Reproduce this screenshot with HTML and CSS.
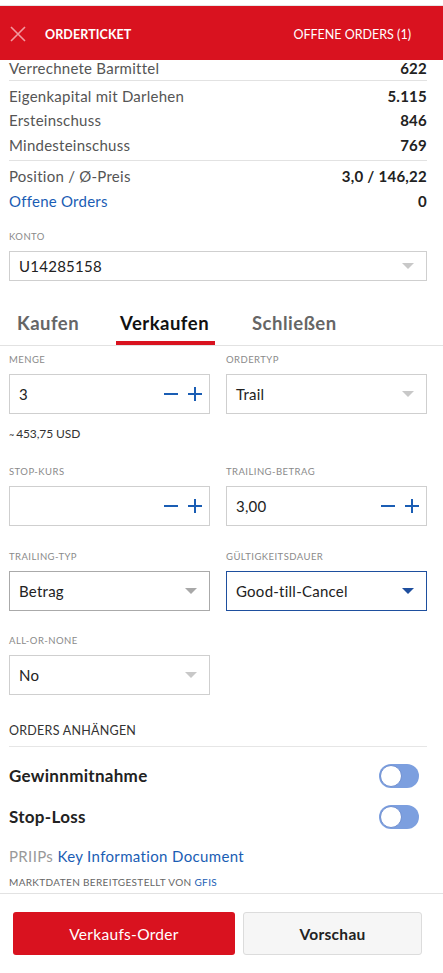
FILE: index.html
```html
<!DOCTYPE html>
<html lang="de">
<head>
    <meta charset="UTF-8">
    <meta name="viewport" content="width=device-width, initial-scale=1.0">
    <title>Orderticket</title>
    <link rel="stylesheet" href="styles.css">
</head>
<body>
    <div class="screen">
        <!-- Header (liegt über dem gescrollten Inhalt) -->
        <div class="header">
            <div class="header-left">
                <svg class="close-icon" width="16" height="16" viewBox="0 0 16 16">
                    <path d="M1 1 L15 15 M15 1 L1 15" stroke="currentColor" stroke-width="1.6" fill="none"/>
                </svg>
                <span class="header-title">ORDERTICKET</span>
            </div>
            <span class="header-link">OFFENE ORDERS (1)</span>
        </div>

        <div class="content">
            <!-- Kontoübersicht -->
            <div class="summary">
                <div class="row top"><span class="row-label">Verrechnete Barmittel</span><span class="row-value">622</span></div>
                <div class="divider"></div>
                <div class="row"><span class="row-label">Eigenkapital mit Darlehen</span><span class="row-value">5.115</span></div>
                <div class="row"><span class="row-label">Ersteinschuss</span><span class="row-value">846</span></div>
                <div class="row"><span class="row-label">Mindesteinschuss</span><span class="row-value">769</span></div>
                <div class="divider"></div>
                <div class="row"><span class="row-label">Position / Ø-Preis</span><span class="row-value">3,0 / 146,22</span></div>
                <div class="row"><span class="row-label link">Offene Orders</span><span class="row-value">0</span></div>
            </div>

            <!-- Konto -->
            <div class="field konto">
                <div class="field-label">KONTO</div>
                <div class="select">
                    <span>U14285158</span>
                    <span class="arrow"></span>
                </div>
            </div>

            <!-- Tabs -->
            <div class="tabs">
                <div class="tab tab-buy">Kaufen</div>
                <div class="tab tab-sell active">Verkaufen</div>
                <div class="tab">Schließen</div>
            </div>

            <!-- Formular -->
            <div class="form-grid">
                <div class="field">
                    <div class="field-label">MENGE</div>
                    <div class="input">
                        <span>3</span>
                        <span class="stepper"><span class="minus"></span><span class="plus"></span></span>
                    </div>
                    <div class="hint"><span class="tilde">~</span>453,75 USD</div>
                </div>
                <div class="field">
                    <div class="field-label">ORDERTYP</div>
                    <div class="select">
                        <span>Trail</span>
                        <span class="arrow"></span>
                    </div>
                </div>

                <div class="field row-2">
                    <div class="field-label">STOP-KURS</div>
                    <div class="input">
                        <span></span>
                        <span class="stepper"><span class="minus"></span><span class="plus"></span></span>
                    </div>
                </div>
                <div class="field row-2">
                    <div class="field-label">TRAILING-BETRAG</div>
                    <div class="input">
                        <span>3,00</span>
                        <span class="stepper"><span class="minus"></span><span class="plus"></span></span>
                    </div>
                </div>

                <div class="field row-3">
                    <div class="field-label">TRAILING-TYP</div>
                    <div class="select dark">
                        <span>Betrag</span>
                        <span class="arrow"></span>
                    </div>
                </div>
                <div class="field row-3">
                    <div class="field-label">GÜLTIGKEITSDAUER</div>
                    <div class="select focused">
                        <span>Good-till-Cancel</span>
                        <span class="arrow"></span>
                    </div>
                </div>

                <div class="field row-4">
                    <div class="field-label">ALL-OR-NONE</div>
                    <div class="select">
                        <span>No</span>
                        <span class="arrow"></span>
                    </div>
                </div>
            </div>

            <!-- Orders anhängen -->
            <div class="attach">
                <div class="attach-title">ORDERS ANHÄNGEN</div>
                <div class="toggle-row first">
                    <span>Gewinnmitnahme</span>
                    <span class="toggle"><span class="knob"></span></span>
                </div>
                <div class="toggle-row">
                    <span>Stop-Loss</span>
                    <span class="toggle"><span class="knob"></span></span>
                </div>
                <div class="priips">PRIIPs <span class="link">Key Information Document</span></div>
                <div class="source">MARKTDATEN BEREITGESTELLT VON <span class="link">GFIS</span></div>
            </div>
        </div>

        <!-- Aktionen -->
        <div class="footer">
            <button class="btn btn-primary">Verkaufs-Order</button>
            <button class="btn btn-secondary">Vorschau</button>
        </div>
    </div>
</body>
</html>
```

FILE: styles.css
```css
/* Reset */
* {
    margin: 0;
    padding: 0;
    box-sizing: border-box;
}

body {
    font-family: Lato, 'Open Sans', sans-serif;
    background: #fff;
    color: #222;
    width: 443px;
    height: 973px;
    overflow: hidden;
    letter-spacing: 0.25px;
}

.screen {
    position: relative;
    height: 973px;
    border-top: 5px solid #fff;
    display: flex;
    flex-direction: column;
}

/* Header */
.header {
    position: absolute;
    top: 1px;
    left: 0;
    right: 0;
    height: 54px;
    background: #d9121f;
    color: #fff;
    display: flex;
    align-items: center;
    justify-content: space-between;
    padding: 2px 32px 0 10px;
    z-index: 2;
    box-shadow: 0 -1px 0 #e6e6e6;
    letter-spacing: 0;
}

.header-left {
    display: flex;
    align-items: center;
    gap: 19px;
}

.close-icon {
    color: #f29aa0;
}

.header-title {
    font-size: 12.5px;
    font-weight: 700;
    letter-spacing: 0.1px;
}

.header-link {
    font-size: 12.5px;
}

/* Content */
.content {
    flex: 1;
    padding-top: 49px;
}

.summary {
    padding: 0 16px 0 9px;
    font-size: 15px;
}

.row {
    display: flex;
    justify-content: space-between;
    height: 24.5px;
    line-height: 24.5px;
}

.row.top {
    height: 22.5px;
    line-height: 28.5px;
}

.row-label {
    color: #555;
}

.row-value {
    font-weight: 700;
    color: #222;
}

.link {
    color: #1a5db4;
}

.divider {
    height: 1px;
    background: #e2e2e2;
    margin: 3px 0;
}

/* Fields */
.field-label {
    font-size: 9.5px;
    color: #8a8a8a;
    height: 20px;
    line-height: 12px;
    letter-spacing: 0.45px;
}

.konto {
    padding: 18px 16px 0 9px;
}

.select,
.input {
    height: 30px;
    border: 1px solid #cfcfcf;
    display: flex;
    align-items: center;
    justify-content: space-between;
    padding: 0 11px 0 9px;
    font-size: 15px;
    color: #222;
}

.form-grid .select,
.form-grid .input {
    height: 40px;
}

.arrow {
    width: 0;
    height: 0;
    border-left: 6px solid transparent;
    border-right: 6px solid transparent;
    border-top: 6px solid #c8c8c8;
    margin-right: 1px;
}

.select.dark {
    border-color: #aaa;
}

.select.dark .arrow {
    border-top-color: #a8a8a8;
}

.select.focused {
    border-color: #1e4f9e;
}

.select.focused .arrow {
    border-top-color: #1e4f9e;
}

.stepper {
    display: flex;
    gap: 10px;
    align-items: center;
    margin-right: -4px;
}

.minus,
.plus {
    position: relative;
    width: 14px;
    height: 14px;
}

.minus::before,
.plus::before,
.plus::after {
    content: '';
    position: absolute;
    background: #1a5db4;
}

.minus::before,
.plus::before {
    left: 0;
    right: 0;
    top: 6px;
    height: 2px;
}

.plus::after {
    top: 0;
    bottom: 0;
    left: 6px;
    width: 2px;
}

.hint {
    font-size: 12px;
    color: #333;
    margin-top: 12px;
    letter-spacing: -0.1px;
}

.tilde {
    font-size: 9px;
    margin-right: 2px;
}

/* Tabs */
.tabs {
    margin-top: 31px;
    display: flex;
    padding-left: 17px;
    border-bottom: 1px solid #e2e2e2;
}

.tab {
    font-size: 18.5px;
    font-weight: 700;
    color: #666;
    height: 33px;
    line-height: 22px;
    position: relative;
    letter-spacing: 0.5px;
}

.tab-buy {
    width: 103px;
}

.tab-sell {
    width: 132px;
}

.tab.active {
    color: #111;
}

.tab.active::after {
    content: '';
    position: absolute;
    left: -4px;
    width: 99px;
    bottom: 0;
    height: 4px;
    background: #d9121f;
}

.form-grid {
    display: grid;
    grid-template-columns: 201px 201px;
    column-gap: 16px;
    row-gap: 22px;
    padding: 8px 16px 0 9px;
}

.form-grid .row-2 {
    margin-top: 3px;
}

.form-grid .row-3 {
    margin-top: 3px;
}

.form-grid .row-4 {
    margin-top: 2px;
}

/* Orders anhängen */
.attach {
    padding: 28px 16px 0 9px;
}

.attach-title {
    font-size: 12.5px;
    color: #333;
    padding-bottom: 8px;
    border-bottom: 1px solid #e6e6e6;
}

.toggle-row {
    display: flex;
    justify-content: space-between;
    align-items: center;
    height: 41px;
    font-size: 17px;
    font-weight: 700;
    color: #222;
    padding-right: 8px;
    letter-spacing: 0.3px;
}

.toggle-row.first {
    margin-top: 8px;
}

.toggle {
    width: 40px;
    height: 24px;
    border-radius: 12px;
    background: #7c9fdf;
    position: relative;
}

.knob {
    position: absolute;
    left: 1px;
    top: 1px;
    width: 22px;
    height: 22px;
    border-radius: 50%;
    background: #fff;
    border: 1px solid #6f8fd0;
}

.priips {
    font-size: 15px;
    color: #999;
    margin-top: 10px;
    letter-spacing: 0.35px;
}

.source {
    font-size: 10px;
    color: #666;
    margin-top: 11px;
    letter-spacing: 0.35px;
}

/* Footer */
.footer {
    border-top: 1px solid #e2e2e2;
    height: 80px;
    display: flex;
    gap: 8px;
    padding: 18px 21px 0 13px;
}

.btn {
    height: 43px;
    border-radius: 3px;
    font-family: inherit;
    font-size: 15.5px;
    letter-spacing: 0.3px;
    cursor: pointer;
}

.btn-primary {
    width: 222px;
    background: #d9121f;
    color: #fff;
    border: none;
}

.btn-secondary {
    flex: 1;
    background: #f6f6f6;
    color: #222;
    font-weight: 700;
    border: 1px solid #dcdcdc;
}
```
